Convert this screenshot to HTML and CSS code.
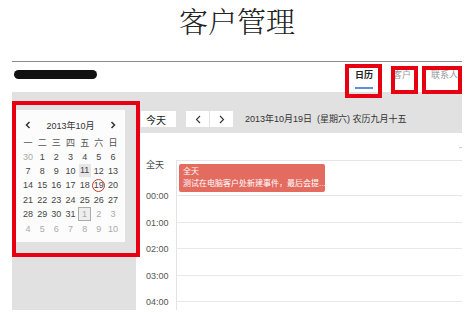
FILE: index.html
```html
<!DOCTYPE html>
<html lang="zh-CN">
<head>
<meta charset="UTF-8">
<title>客户管理</title>
<link rel="stylesheet" href="styles.css">
</head>
<body>
<h1 class="title">客户管理</h1>
<div class="app">
  <div class="topbar">
    <div class="redact"></div>
    <nav class="tabs">
      <span class="tab active">日历</span>
      <span class="tab">客户</span>
      <span class="tab">联系人</span>
    </nav>
  </div>
  <div class="content">
    <aside class="side">
      <div class="minical">
        <div class="mc-head">
          <span class="mc-arrow"><svg width="6" height="8" viewBox="0 0 6 8"><polyline points="4.5,1 1.5,4 4.5,7" fill="none" stroke="#333" stroke-width="1.5"/></svg></span>
          <span class="mc-title">2013年10月</span>
          <span class="mc-arrow"><svg width="6" height="8" viewBox="0 0 6 8"><polyline points="1.5,1 4.5,4 1.5,7" fill="none" stroke="#333" stroke-width="1.5"/></svg></span>
        </div>
        <div class="mc-grid">
          <div class="wd">一</div><div class="wd">二</div><div class="wd">三</div><div class="wd">四</div><div class="wd">五</div><div class="wd">六</div><div class="wd">日</div>
          <div class="d muted"><span>30</span></div><div class="d"><span>1</span></div><div class="d"><span>2</span></div><div class="d"><span>3</span></div><div class="d"><span>4</span></div><div class="d"><span>5</span></div><div class="d"><span>6</span></div>
          <div class="d"><span>7</span></div><div class="d"><span>8</span></div><div class="d"><span>9</span></div><div class="d"><span>10</span></div><div class="d sel"><span>11</span></div><div class="d"><span>12</span></div><div class="d"><span>13</span></div>
          <div class="d"><span>14</span></div><div class="d"><span>15</span></div><div class="d"><span>16</span></div><div class="d"><span>17</span></div><div class="d"><span>18</span></div><div class="d today"><span>19</span></div><div class="d"><span>20</span></div>
          <div class="d"><span>21</span></div><div class="d"><span>22</span></div><div class="d"><span>23</span></div><div class="d"><span>24</span></div><div class="d"><span>25</span></div><div class="d"><span>26</span></div><div class="d"><span>27</span></div>
          <div class="d"><span>28</span></div><div class="d"><span>29</span></div><div class="d"><span>30</span></div><div class="d"><span>31</span></div><div class="d muted boxed"><span>1</span></div><div class="d muted"><span>2</span></div><div class="d muted"><span>3</span></div>
          <div class="d muted"><span>4</span></div><div class="d muted"><span>5</span></div><div class="d muted"><span>6</span></div><div class="d muted"><span>7</span></div><div class="d muted"><span>8</span></div><div class="d muted"><span>9</span></div><div class="d muted"><span>10</span></div>
        </div>
      </div>
    </aside>
    <main class="main">
      <div class="toolbar">
        <span class="btn today-btn">今天</span>
        <span class="btn-group">
          <span class="btn nav"><svg width="6" height="9" viewBox="0 0 6 9"><polyline points="5,1 1.5,4.5 5,8" fill="none" stroke="#333" stroke-width="1.1"/></svg></span>
          <span class="btn nav"><svg width="6" height="9" viewBox="0 0 6 9"><polyline points="1,1 4.5,4.5 1,8" fill="none" stroke="#333" stroke-width="1.1"/></svg></span>
        </span>
        <span class="cur-date">2013年10月19日&nbsp; (星期六) 农历九月十五</span>
      </div>
      <div class="grid">
        <div class="corner"></div>
        <div class="allday">
          <div class="lbl">全天</div>
          <div class="slot">
            <div class="event">全天<br>测试在电脑客户处新建事件，最后会提...</div>
          </div>
        </div>
        <div class="hour"><div class="lbl"><span>00:00</span></div><div class="slot"></div></div>
        <div class="hour"><div class="lbl"><span>01:00</span></div><div class="slot"></div></div>
        <div class="hour"><div class="lbl"><span>02:00</span></div><div class="slot"></div></div>
        <div class="hour"><div class="lbl"><span>03:00</span></div><div class="slot"></div></div>
        <div class="hour"><div class="lbl"><span>04:00</span></div><div class="slot"></div></div>
      </div>
    </main>
  </div>
</div>
<div class="mark mark-cal"></div>
<div class="mark mark-tab1"></div>
<div class="mark mark-tab2"></div>
<div class="mark mark-tab3"></div>
</body>
</html>
```
FILE: styles.css
```css
body,html{
   margin:0;
   padding:0;
   font-family:"Liberation Sans","Noto Sans CJK SC",sans-serif;
   background:#fff;
   color:#333;
}
.title{
   margin:0;
   height:61px;
   line-height:42px;
   text-align:center;
   font-family:"Noto Serif CJK SC","Noto Sans CJK SC",serif;
   font-weight:300;
   font-size:29px;
   color:#222;
}
.app{
   margin:0 12px;
   border-top:1px solid #8c8c8c;
}
.topbar{
   height:30px;
   display:flex;
   justify-content:space-between;
}
.redact{
   margin:8px 0 0 2px;
   width:83px;
   height:9px;
   background:#111;
   border-radius:5px;
}
.tabs{
   display:flex;
   gap:20px;
   padding-right:4px;
}
.tab{
   padding-top:8px;
   line-height:10px;
   font-size:9px;
   color:#999;
   height:19px;
   box-sizing:border-box;
}
.tab.active{
   color:#222;
   font-weight:bold;
   height:27px;
   border-bottom:2px solid #5b8fd8;
}
.content{
   display:flex;
   height:218px;
}
.side{
   width:124px;
   background:#e1e1e1;
   padding:18px 0 0 4px;
   box-sizing:border-box;
}
.minical{
   width:109px;
   background:#fcfcfc;
   padding:5px 5px 6px;
   box-sizing:border-box;
}
.mc-head{
   height:20px;
   display:flex;
   justify-content:space-between;
   align-items:center;
   font-size:9px;
   color:#333;
}
.mc-arrow{
   width:14px;
   display:flex;
   justify-content:center;
}
.mc-grid{
   display:grid;
   grid-template-columns:repeat(7,1fr);
   grid-auto-rows:14.4px;
   font-size:9px;
}
.wd,.d{
   display:flex;
   align-items:center;
   justify-content:center;
   color:#444;
}
.wd{
   color:#555;
}
.d.muted{
   color:#aaa;
}
.d.sel span{
   background:#e6e6e6;
   width:12px;
   height:13px;
   line-height:13px;
   text-align:center;
}
.d.today span{
   width:11px;
   height:11px;
   line-height:11px;
   text-align:center;
   border:1.5px solid #c0392b;
   border-radius:50%;
}
.d.boxed span{
   width:11px;
   height:12px;
   line-height:12px;
   text-align:center;
   border:1px solid #aaa;
   background:#eee;
}
.main{
   flex:1;
   display:flex;
   flex-direction:column;
}
.toolbar{
   height:41px;
   background:#e1e1e1;
   padding:19px 0 0 5px;
   box-sizing:border-box;
   display:flex;
   align-items:flex-start;
   font-size:9px;
}
.btn{
   height:16px;
   background:#fff;
   display:flex;
   align-items:center;
}
.today-btn{
   width:35px;
   padding-left:5px;
   box-sizing:border-box;
   font-size:10px;
   color:#222;
}
.btn-group{
   display:flex;
   gap:1px;
   margin-left:10px;
}
.nav{
   width:23px;
   justify-content:center;
}
.cur-date{
   margin-left:12px;
   line-height:16px;
   color:#333;
}
.grid{
   flex:1;
   background:#fff;
   overflow:hidden;
   position:relative;
   padding-top:27px;
}
.corner{
   position:absolute;
   right:0;
   top:14px;
   width:3px;
   height:1px;
   background:#ccc;
}
.allday,.hour{
   display:flex;
}
.lbl{
   width:40px;
   padding-left:10px;
   box-sizing:border-box;
   font-size:9px;
   color:#444;
   line-height:10px;
}
.slot{
   flex:1;
   border-left:1px solid #e3e3e3;
}
.allday .slot{
   border-top:1px solid #e6e6e6;
   border-bottom:1px solid #e6e6e6;
   padding:3px 2px;
}
.event{
   width:146px;
   background:#e36b5f;
   color:#fff;
   font-size:8px;
   line-height:12px;
   padding:2px 4px;
   box-sizing:border-box;
   border-radius:2px;
   white-space:nowrap;
}
.hour{
   height:26.5px;
}
.hour .lbl span{
   display:block;
   margin-top:-6px;
   line-height:12px;
   color:#555;
}
.hour .slot{
   border-bottom:1px solid #e8e8e8;
}
.mark{
   position:absolute;
   border:4px solid #e60012;
   box-sizing:border-box;
}
.mark-cal{
   left:12px;
   top:101px;
   width:128px;
   height:156px;
}
.mark-tab1{
   left:345px;
   top:64px;
   width:37px;
   height:34px;
}
.mark-tab2{
   left:391px;
   top:66px;
   width:27px;
   height:28px;
}
.mark-tab3{
   left:422px;
   top:66px;
   width:40px;
   height:28px;
}
```
